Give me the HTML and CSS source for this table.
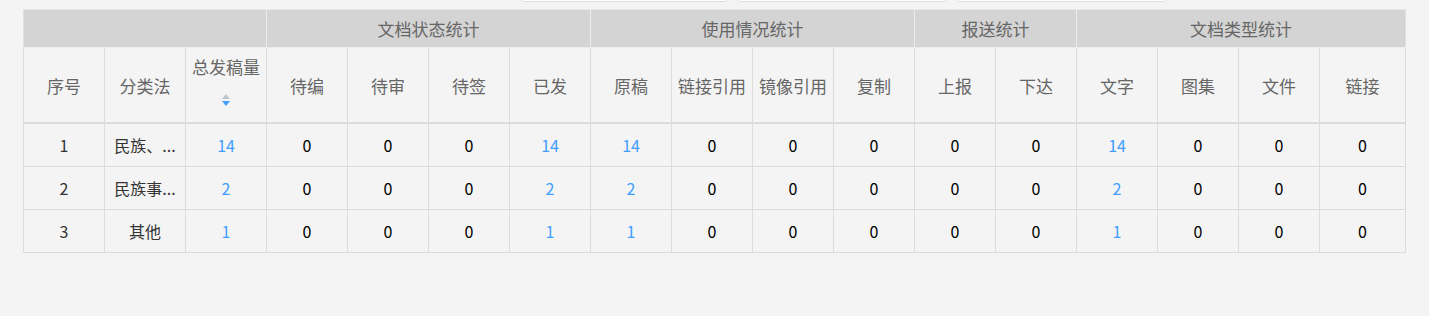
FILE: index.html
```html
<!DOCTYPE html>
<html lang="zh">
<head>
<meta charset="utf-8">
<link rel="stylesheet" href="styles.css">
</head>
<body>
<div class="page">
  <div class="filters">
    <div class="field f1"></div>
    <div class="field f2"></div>
    <div class="field f3"></div>
  </div>
  <table class="stats">
    <colgroup>
      <col class="c"><col class="c"><col class="c"><col class="c"><col class="c"><col class="c"><col class="c"><col class="c"><col class="c"><col class="c"><col class="c"><col class="c"><col class="c"><col class="c"><col class="c"><col class="c"><col class="clast">
    </colgroup>
    <thead>
      <tr class="group">
        <th colspan="3"></th>
        <th colspan="4">文档状态统计</th>
        <th colspan="4">使用情况统计</th>
        <th colspan="2">报送统计</th>
        <th colspan="4">文档类型统计</th>
      </tr>
      <tr class="sub">
        <th>序号</th>
        <th>分类法</th>
        <th class="sortable"><div class="sort-head"><span>总发稿量</span><span class="caret"><i class="up"></i><i class="down"></i></span></div></th>
        <th>待编</th>
        <th>待审</th>
        <th>待签</th>
        <th>已发</th>
        <th>原稿</th>
        <th>链接引用</th>
        <th>镜像引用</th>
        <th>复制</th>
        <th>上报</th>
        <th>下达</th>
        <th>文字</th>
        <th>图集</th>
        <th>文件</th>
        <th>链接</th>
      </tr>
    </thead>
    <tbody>
      <tr>
        <td class="txt">1</td><td class="txt">民族、<span class="dots">...</span></td>
        <td class="link">14</td><td>0</td><td>0</td><td>0</td><td class="link">14</td>
        <td class="link">14</td><td>0</td><td>0</td><td>0</td>
        <td>0</td><td>0</td>
        <td class="link">14</td><td>0</td><td>0</td><td>0</td>
      </tr>
      <tr>
        <td class="txt">2</td><td class="txt">民族事<span class="dots">...</span></td>
        <td class="link">2</td><td>0</td><td>0</td><td>0</td><td class="link">2</td>
        <td class="link">2</td><td>0</td><td>0</td><td>0</td>
        <td>0</td><td>0</td>
        <td class="link">2</td><td>0</td><td>0</td><td>0</td>
      </tr>
      <tr>
        <td class="txt">3</td><td class="txt">其他</td>
        <td class="link">1</td><td>0</td><td>0</td><td>0</td><td class="link">1</td>
        <td class="link">1</td><td>0</td><td>0</td><td>0</td>
        <td>0</td><td>0</td>
        <td class="link">1</td><td>0</td><td>0</td><td>0</td>
      </tr>
    </tbody>
  </table>
</div>
</body>
</html>
```

FILE: styles.css
```css
html, body {
  margin: 0;
  padding: 0;
  background: #f4f4f4;
}
body {
  font-family: "Noto Sans CJK SC", "Microsoft YaHei", sans-serif;
  height: 316px;
  overflow: hidden;
}
.page {
  padding: 0 24px 0 23px;
}
.filters {
  display: flex;
  gap: 8px;
  padding-left: 497px;
  margin-top: -30px;
  height: 32px;
}
.field {
  height: 30px;
  border: 1px solid #dcdfe6;
  border-radius: 4px;
  background: #fff;
}
.f1 { width: 207px; }
.f2 { width: 208px; }
.f3 { width: 210px; }
.stats {
  margin-top: 7px;
  width: 1382px;
  table-layout: fixed;
  border-collapse: collapse;
  background: #f4f4f4;
}
.c { width: 81px; }
.clast { width: 86px; }
.stats th, .stats td {
  border: 1px solid #dcdcdc;
  text-align: center;
  padding: 0;
  font-weight: normal;
}
.stats th {
  color: #666;
  font-size: 17px;
  line-height: 23px;
  white-space: nowrap;
}
.group th {
  background: #d4d4d4;
  height: 37px;
  border-color: #ececec;
  border-top-color: #e6e6e6;
  border-bottom-color: #ececec;
}
.group th:first-child { border-left-color: #e0e0e0; }
.group th:last-child { border-right-color: #e0e0e0; }
.sub th {
  height: 74px;
  border-bottom: 2px solid #dcdcdc;
  border-top-color: #ececec;
}
.sub th.sortable {
  vertical-align: top;
}
.sort-head {
  display: flex;
  flex-direction: column;
  align-items: center;
  gap: 16px;
  padding-top: 7px;
}
.caret {
  display: flex;
  flex-direction: column;
  align-items: center;
  gap: 2px;
}
.caret i {
  display: block;
  width: 0;
  height: 0;
  border-left: 4px solid transparent;
  border-right: 4px solid transparent;
}
.caret .up { border-bottom: 5px solid #c0c4cc; }
.caret .down { border-top: 5px solid #409eff; }
.stats td {
  height: 42px;
  font-size: 16px;
  color: #000;
}
.stats td.txt { color: #333; white-space: nowrap; }
.stats td.link { color: #409eff; }
.dots { letter-spacing: 0; }
```
